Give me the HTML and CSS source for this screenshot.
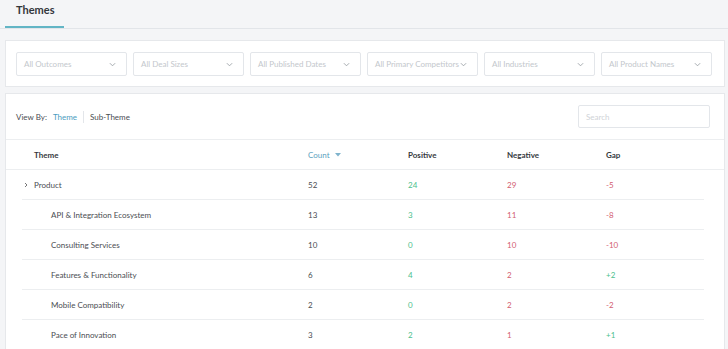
FILE: index.html
```html
<!DOCTYPE html>
<html>
<head>
<meta charset="utf-8">
<link rel="stylesheet" href="styles.css">
</head>
<body>
<div class="tabs">
  <div class="tab active">Themes</div>
</div>

<div class="card filters">
  <div class="select"><span>All Outcomes</span><svg class="chev" viewBox="0 0 8 5"><path d="M1 1l3 3 3-3"/></svg></div>
  <div class="select"><span>All Deal Sizes</span><svg class="chev" viewBox="0 0 8 5"><path d="M1 1l3 3 3-3"/></svg></div>
  <div class="select"><span>All Published Dates</span><svg class="chev" viewBox="0 0 8 5"><path d="M1 1l3 3 3-3"/></svg></div>
  <div class="select"><span>All Primary Competitors</span><svg class="chev" viewBox="0 0 8 5"><path d="M1 1l3 3 3-3"/></svg></div>
  <div class="select"><span>All Industries</span><svg class="chev" viewBox="0 0 8 5"><path d="M1 1l3 3 3-3"/></svg></div>
  <div class="select"><span>All Product Names</span><svg class="chev" viewBox="0 0 8 5"><path d="M1 1l3 3 3-3"/></svg></div>
</div>

<div class="card table-card">
  <div class="toolbar">
    <div class="viewby">
      <span class="label">View By:</span>
      <span class="opt on">Theme</span>
      <span class="sep"></span>
      <span class="opt">Sub-Theme</span>
    </div>
    <div class="search">Search</div>
  </div>

  <div class="thead">
    <div class="cell theme">Theme</div>
    <div class="cell sorted">Count <svg class="sort" viewBox="0 0 6 4"><path d="M0 0h6L3 3.5z"/></svg></div>
    <div class="cell">Positive</div>
    <div class="cell">Negative</div>
    <div class="cell">Gap</div>
  </div>

  <div class="tbody">
    <div class="row parent">
      <div class="cell theme"><svg class="exp" viewBox="0 0 4 6"><path d="M1 1l2 2-2 2"/></svg>Product</div>
      <div class="cell">52</div>
      <div class="cell pos">24</div>
      <div class="cell neg">29</div>
      <div class="cell neg">-5</div>
    </div>
    <div class="row child">
      <div class="cell theme">API &amp; Integration Ecosystem</div>
      <div class="cell">13</div>
      <div class="cell pos">3</div>
      <div class="cell neg">11</div>
      <div class="cell neg">-8</div>
    </div>
    <div class="row child">
      <div class="cell theme">Consulting Services</div>
      <div class="cell">10</div>
      <div class="cell pos">0</div>
      <div class="cell neg">10</div>
      <div class="cell neg">-10</div>
    </div>
    <div class="row child">
      <div class="cell theme">Features &amp; Functionality</div>
      <div class="cell">6</div>
      <div class="cell pos">4</div>
      <div class="cell neg">2</div>
      <div class="cell pos">+2</div>
    </div>
    <div class="row child">
      <div class="cell theme">Mobile Compatibility</div>
      <div class="cell">2</div>
      <div class="cell pos">0</div>
      <div class="cell neg">2</div>
      <div class="cell neg">-2</div>
    </div>
    <div class="row child">
      <div class="cell theme">Pace of Innovation</div>
      <div class="cell">3</div>
      <div class="cell pos">2</div>
      <div class="cell neg">1</div>
      <div class="cell pos">+1</div>
    </div>
  </div>
</div>
</body>
</html>
```

FILE: styles.css
```css
* { box-sizing: border-box; }
html, body { margin: 0; padding: 0; }
body {
  background: #f4f5f7;
  font-family: "Lato", "Noto Sans", sans-serif;
  font-size: 8px;
  color: #4a4d52;
  width: 728px;
  height: 349px;
  overflow: hidden;
}

.tabs {
  height: 29px;
  border-bottom: 1px solid #e2e5e9;
  padding-left: 5px;
  display: flex;
}
.tab {
  width: 59px;
  padding-left: 11px;
  padding-top: 3px;
  font-size: 11px;
  font-weight: 700;
  color: #33373c;
  height: 28px;
}
.tab.active { border-bottom: 2px solid #62b5c5; }

.card {
  background: #fff;
  border: 1px solid #e6e8eb;
  margin-left: 5px;
  margin-right: 3px;
}

.filters {
  margin-top: 11px;
  height: 47px;
  padding: 11px 14px 0 10px;
  display: grid;
  grid-template-columns: repeat(6, 111px);
  column-gap: 6px;
}
.select {
  height: 24px;
  border: 1px solid #e3e6ea;
  border-radius: 2px;
  display: flex;
  align-items: center;
  justify-content: space-between;
  padding: 0 10px 0 7px;
  color: #c3c7cc;
  font-size: 8px;
  white-space: nowrap;
}
.chev {
  width: 7px;
  height: 5px;
  fill: none;
  stroke: #9aa0a6;
  stroke-width: 1;
}

.table-card {
  margin-top: 6px;
  height: 270px;
}
.toolbar {
  height: 45px;
  display: flex;
  align-items: center;
  justify-content: space-between;
  padding: 0 14px 0 10px;
}
.viewby {
  display: flex;
  align-items: center;
  color: #4a4d52;
}
.viewby .label { margin-right: 6px; }
.viewby .opt.on { color: #4a9cc0; }
.viewby .sep {
  width: 1px;
  height: 12px;
  background: #e3e6ea;
  margin: 0 6px;
}
.search {
  width: 132px;
  height: 23px;
  border: 1px solid #e3e6ea;
  border-radius: 2px;
  padding: 0 7px;
  display: flex;
  align-items: center;
  color: #d0d3d7;
}

.thead, .row {
  display: grid;
  grid-template-columns: 286px 100px 99px 99px 1fr;
  align-items: center;
}
.thead {
  height: 31px;
  border-top: 1px solid #eceef0;
  border-bottom: 1px solid #eceef0;
  padding-left: 16px;
  font-weight: 700;
  color: #35393e;
}
.thead .theme { padding-left: 12px; }
.thead .sorted {
  color: #5b9fbe;
  font-weight: 400;
  display: flex;
  align-items: center;
}
.sort {
  width: 6px;
  height: 4px;
  margin-left: 5px;
  fill: #7fb3cc;
}

.tbody {
  margin-left: 16px;
  margin-right: 20px;
}
.row {
  height: 30px;
  border-bottom: 1px solid #eceef0;
}
.parent .theme {
  display: flex;
  align-items: center;
  padding-left: 2px;
}
.exp {
  width: 4px;
  height: 6px;
  margin-right: 6px;
  fill: none;
  stroke: #555;
  stroke-width: 0.8;
}
.child .theme { padding-left: 29px; }
.pos { color: #4cc08c; }
.neg { color: #d25c70; }
```
